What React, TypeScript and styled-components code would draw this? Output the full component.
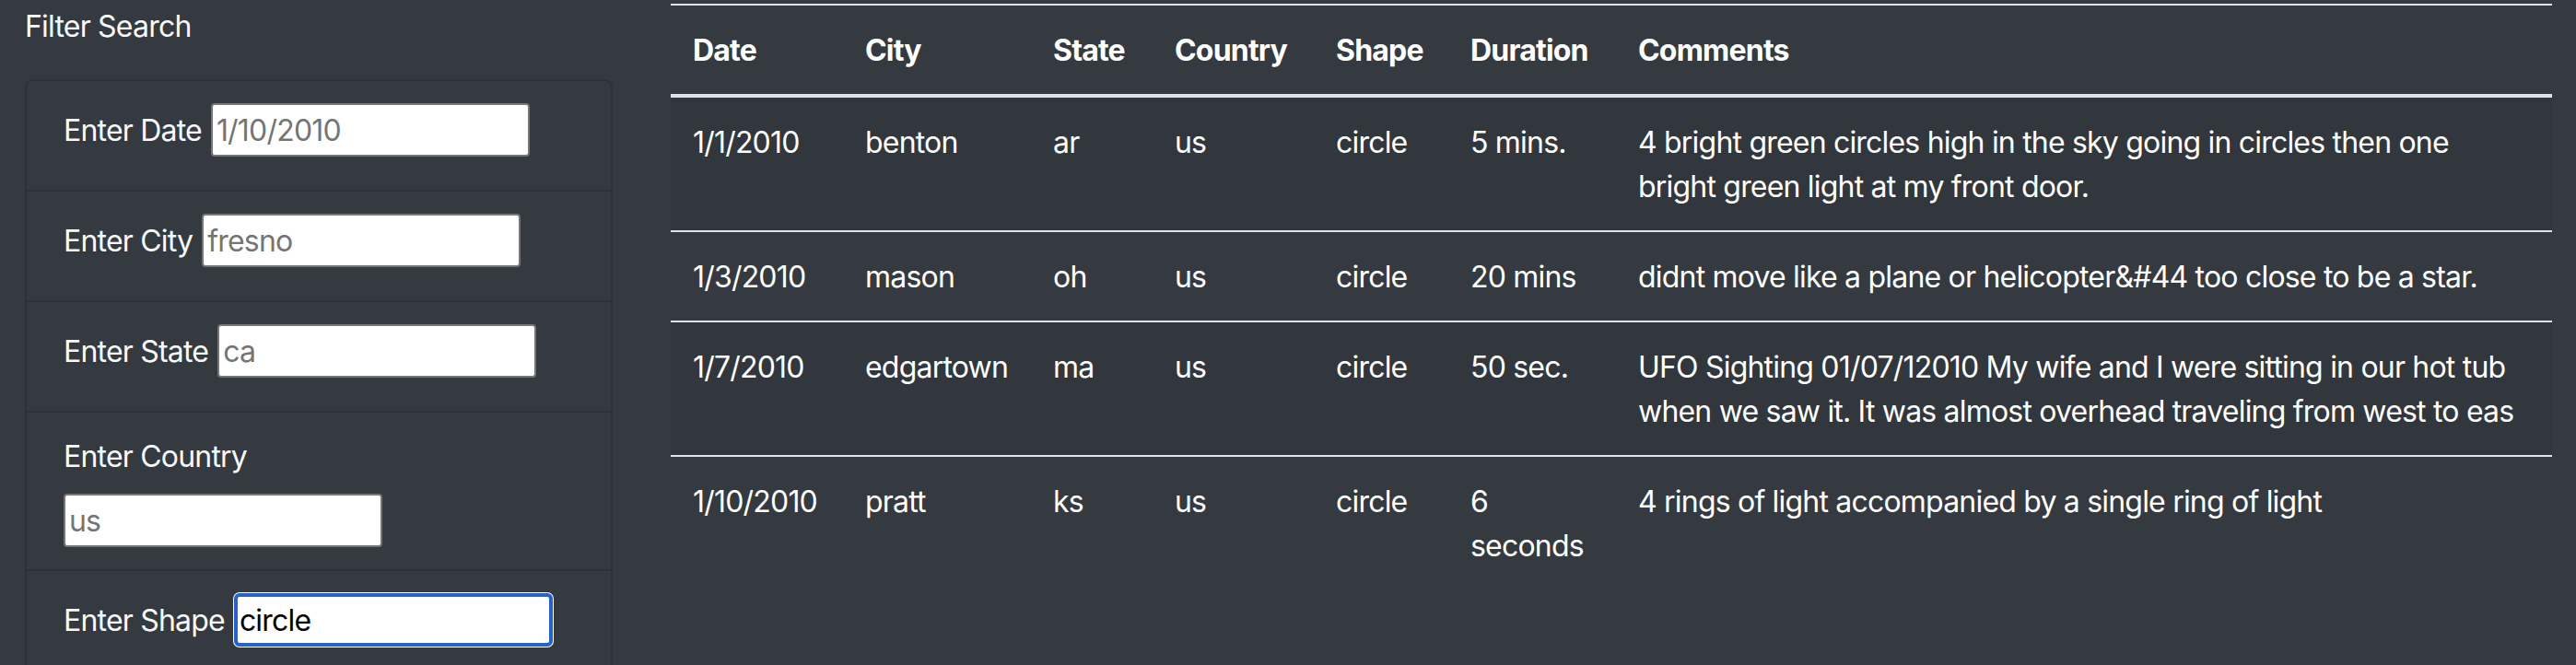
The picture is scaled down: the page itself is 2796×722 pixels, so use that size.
import styled, { createGlobalStyle, css } from 'styled-components';

const GlobalStyle = createGlobalStyle`
	body {
		margin: 0;
		background: #343a40;
		color: #fff;
		font-family: Inter, 'Noto Sans', sans-serif;
		letter-spacing: -0.8px;
	}
`;

type Sighting = {
	date: string;
	city: string;
	state: string;
	country: string;
	shape: string;
	duration: string;
	comments: string;
};

const sightings: Sighting[] = [
	{
		date: '1/1/2010',
		city: 'benton',
		state: 'ar',
		country: 'us',
		shape: 'circle',
		duration: '5 mins.',
		comments: '4 bright green circles high in the sky going in circles then one bright green light at my front door.',
	},
	{
		date: '1/3/2010',
		city: 'mason',
		state: 'oh',
		country: 'us',
		shape: 'circle',
		duration: '20 mins',
		comments: 'didnt move like a plane or helicopter&#44 too close to be a star.',
	},
	{
		date: '1/7/2010',
		city: 'edgartown',
		state: 'ma',
		country: 'us',
		shape: 'circle',
		duration: '50 sec.',
		comments: 'UFO Sighting 01/07/12010 My wife and I were sitting in our hot tub when we saw it. It was almost overhead traveling from west to eas',
	},
	{
		date: '1/10/2010',
		city: 'pratt',
		state: 'ks',
		country: 'us',
		shape: 'circle',
		duration: '6 seconds',
		comments: '4 rings of light accompanied by a single ring of light',
	},
];

const columns = [
	{ label: 'Date', width: 187 },
	{ label: 'City', width: 204 },
	{ label: 'State', width: 132 },
	{ label: 'Country', width: 175 },
	{ label: 'Shape', width: 146 },
	{ label: 'Duration', width: 182 },
	{ label: 'Comments', width: undefined },
];

const App = () => {
	return (
		<>
			<GlobalStyle />
			<Page>
				<Sidebar>
					<Heading>Filter Search</Heading>
					<FilterList>
						<FilterItem>
							<Label htmlFor="date">Enter Date</Label>
							<Input id="date" placeholder="1/10/2010" />
						</FilterItem>
						<FilterItem>
							<Label htmlFor="city">Enter City</Label>
							<Input id="city" placeholder="fresno" />
						</FilterItem>
						<FilterItem>
							<Label htmlFor="state">Enter State</Label>
							<Input id="state" placeholder="ca" />
						</FilterItem>
						<FilterItem $stacked>
							<Label htmlFor="country">Enter Country</Label>
							<Input id="country" placeholder="us" />
						</FilterItem>
						<FilterItem>
							<Label htmlFor="shape">Enter Shape</Label>
							<Input id="shape" defaultValue="circle" $focused />
						</FilterItem>
					</FilterList>
				</Sidebar>
				<Main>
					<Table>
						<colgroup>
							{columns.map((c) => (
								<col key={c.label} style={c.width ? { width: c.width } : undefined} />
							))}
						</colgroup>
						<thead>
							<tr>
								{columns.map((c) => (
									<HeadCell key={c.label}>{c.label}</HeadCell>
								))}
							</tr>
						</thead>
						<tbody>
							{sightings.map((s) => (
								<Row key={s.date}>
									<Cell>{s.date}</Cell>
									<Cell>{s.city}</Cell>
									<Cell>{s.state}</Cell>
									<Cell>{s.country}</Cell>
									<Cell>{s.shape}</Cell>
									<Cell>{s.duration}</Cell>
									<Cell>{s.comments}</Cell>
								</Row>
							))}
						</tbody>
					</Table>
				</Main>
			</Page>
		</>
	);
};

export default App;

const Page = styled.div`
	display: grid;
	grid-template-columns: 699px 1fr;
	padding-top: 4px;
	min-height: 718px;
`;

const Sidebar = styled.aside`
	padding: 0 34px 0 27px;
`;

const Heading = styled.h5`
	margin: 0 0 33px;
	padding-top: 1px;
	font-size: 32px;
	line-height: 48px;
	font-weight: 400;
	color: #f8f9fa;
`;

const FilterList = styled.ul`
	margin: 0;
	padding: 0;
	list-style: none;
	border: 2px solid rgba(0, 0, 0, 0.125);
	border-radius: 8px;
`;

const FilterItem = styled.li<{ $stacked?: boolean }>(
	({ $stacked }) => css`
		display: ${$stacked ? 'block' : 'flex'};
		align-items: center;
		gap: 10px;
		padding: ${$stacked ? '24px 40px 24px' : '24px 40px 36px'};

		& + & {
			border-top: 2px solid rgba(0, 0, 0, 0.125);
		}

		label {
			display: ${$stacked ? 'block' : 'inline'};
			margin-bottom: ${$stacked ? '16px' : '0'};
			padding-top: ${$stacked ? '0' : '2px'};
		}
	`
);

const Label = styled.label`
	font-size: 32px;
	line-height: 48px;
	color: #f8f9fa;
	white-space: nowrap;
`;

const Input = styled.input<{ $focused?: boolean }>(
	({ $focused }) => css`
		box-sizing: border-box;
		width: 346px;
		height: 58px;
		padding: 2px 4px;
		border: 2px solid #767676;
		border-radius: 4px;
		background: #fff;
		color: #000;
		font-family: Inter, 'Noto Sans', sans-serif;
		font-size: 32px;
		letter-spacing: -0.8px;
		outline: none;

		&::placeholder {
			color: #757575;
		}

		${$focused &&
		css`
			border: 4px solid #2563c9;
			border-radius: 6px;
			box-shadow: 0 0 0 1px #fff;
			padding: 0 2px;
		`}
	`
);

const Main = styled.main`
	padding: 0 26px 0 29px;
`;

const Table = styled.table`
	width: 100%;
	border-collapse: collapse;
	table-layout: fixed;
	color: #fff;
`;

const cellBase = css`
	padding: 25px 24px 23px;
	font-size: 32px;
	line-height: 48px;
	text-align: left;
	vertical-align: top;
	border-top: 2px solid #dee2e6;
`;

const HeadCell = styled.th`
	${cellBase};
	font-weight: 700;
	border-bottom: 4px solid #dee2e6;
	white-space: nowrap;
`;

const Row = styled.tr`
	&:nth-of-type(odd) {
		background: rgba(0, 0, 0, 0.05);
	}
`;

const Cell = styled.td`
	${cellBase};
	font-weight: 400;
`;
